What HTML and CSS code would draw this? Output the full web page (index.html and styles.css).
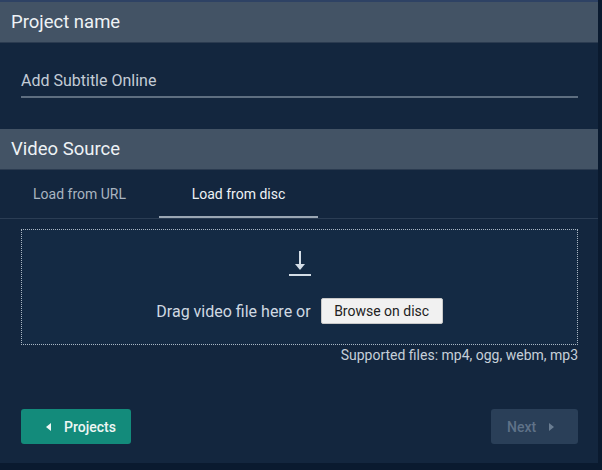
FILE: index.html
```html
<!DOCTYPE html>
<html>
<head>
<meta charset="utf-8">
<link rel="stylesheet" href="styles.css">
</head>
<body>
<div class="panel">
  <div class="section-head">Project name</div>
  <div class="name-body">
    <div class="field">Add Subtitle Online</div>
  </div>
  <div class="section-head">Video Source</div>
  <div class="tabs">
    <div class="tab">Load from URL</div>
    <div class="tab active">Load from disc</div>
  </div>
  <div class="source-body">
    <div class="dropzone">
      <svg class="dl-icon" width="24" height="28" viewBox="0 0 24 28">
        <path d="M12 2 V20" stroke="#d4dde6" stroke-width="2" fill="none"/>
        <path d="M7 15 L12 21 L17 15 Z" fill="#d4dde6"/>
        <rect x="1" y="25" width="22" height="2" fill="#d4dde6"/>
      </svg>
      <div class="drop-row">
        <span class="drop-text">Drag video file here or</span>
        <button class="browse">Browse on disc</button>
      </div>
    </div>
    <div class="supported">Supported files: mp4, ogg, webm, mp3</div>
  </div>
  <div class="actions">
    <button class="btn btn-primary"><span class="tri-left"></span>Projects</button>
    <button class="btn btn-disabled">Next<span class="tri-right"></span></button>
  </div>
</div>
</body>
</html>
```
FILE: styles.css
```css
html, body {
  margin: 0;
  padding: 0;
  background: #0a1a2f;
  font-family: Roboto, "Liberation Sans", sans-serif;
}
.panel {
  width: 598px;
  height: 463px;
  background: #13263e;
  border-top: 2px solid #2e4264;
  box-sizing: border-box;
  display: flex;
  flex-direction: column;
}
.section-head {
  background: #435365;
  color: #eef2f5;
  font-size: 18.5px;
  height: 41px;
  line-height: 40px;
  padding-left: 11px;
  border-bottom: 1px solid #2b3b50;
  box-sizing: border-box;
}
.name-body {
  padding: 27px 20px 0 21px;
  height: 86px;
  box-sizing: border-box;
}
.field {
  color: #c3ccd6;
  font-size: 16px;
  height: 28px;
  line-height: 22px;
  border-bottom: 2px solid #5e6e80;
  box-sizing: border-box;
  width: 557px;
}
.tabs {
  display: flex;
  height: 49px;
  border-bottom: 1px solid #2b3d54;
  box-sizing: border-box;
}
.tab {
  width: 159px;
  text-align: center;
  font-size: 14px;
  color: #a9b4c0;
  line-height: 48px;
  box-sizing: border-box;
}
.tab.active {
  color: #eef2f5;
  border-bottom: 2px solid #9aa6b3;
}
.source-body {
  padding: 10px 20px 0 21px;
}
.dropzone {
  width: 557px;
  height: 116px;
  border: 1px dotted #aab6c3;
  box-sizing: border-box;
  display: flex;
  flex-direction: column;
  align-items: center;
  background: #142a44;
}
.dl-icon {
  margin-top: 19px;
}
.drop-row {
  display: flex;
  align-items: center;
  margin-top: 21px;
}
.drop-text {
  color: #d0d9e2;
  font-size: 16px;
  margin-right: 10px;
}
.browse {
  background: #f1f1f1;
  border: 1px solid #c8c8c8;
  border-radius: 2px;
  font-family: Roboto, "Liberation Sans", sans-serif;
  font-size: 14px;
  color: #222;
  height: 26px;
  width: 122px;
  padding: 0;
}
.supported {
  text-align: right;
  color: #c6cfd9;
  font-size: 14px;
  margin-top: 2px;
}
.actions {
  display: flex;
  justify-content: space-between;
  padding: 0 20px 0 21px;
  margin-top: 46px;
}
.btn {
  height: 35px;
  border: none;
  border-radius: 3px;
  font-family: Roboto, "Liberation Sans", sans-serif;
  font-size: 14px;
  font-weight: 500;
  display: flex;
  align-items: center;
}
.btn-primary {
  width: 110px;
  background: #138b7b;
  color: #eef6f4;
  padding-left: 25px;
}
.btn-disabled {
  width: 87px;
  background: #2a3f58;
  color: #5f7288;
  padding-left: 16px;
}
.tri-left {
  width: 0;
  height: 0;
  border-top: 4px solid transparent;
  border-bottom: 4px solid transparent;
  border-right: 5px solid #eef6f4;
  margin-right: 13px;
}
.tri-right {
  width: 0;
  height: 0;
  border-top: 4px solid transparent;
  border-bottom: 4px solid transparent;
  border-left: 5px solid #6a7d92;
  margin-left: 13px;
}
```
